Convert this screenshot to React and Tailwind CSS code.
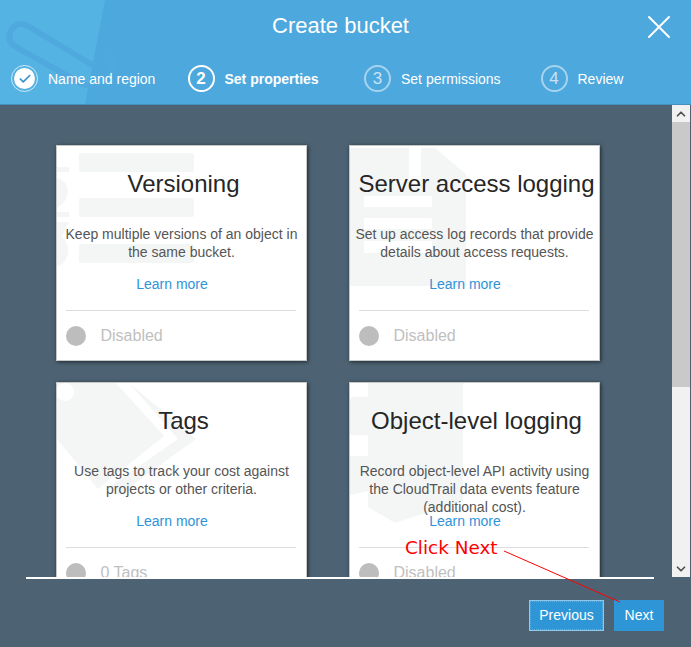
import React from 'react';
import { ChevronUp, ChevronDown, X, Check } from 'lucide-react';

const VersionArt = () => (
  <svg className="absolute left-0 top-0" width="251" height="216" fill="#f4f6f6" aria-hidden="true">
    <rect x="22" y="7" width="115" height="19" rx="2" />
    <rect x="22" y="52" width="115" height="19" rx="2" />
    <rect x="22" y="98" width="115" height="19" rx="2" />
    <rect x="0" y="21" width="12" height="5" />
    <path d="M0 32 Q10 34 11 46 Q10 56 0 62 Z" />
    <rect x="0" y="66" width="12" height="5" />
    <path d="M0 76 H12 L5 90 Q12 98 11 108 Q8 119 0 120 Z" />
  </svg>
);

const ServerArt = () => (
  <svg className="absolute left-0 top-0" width="251" height="216" aria-hidden="true">
    <path d="M0 2 H59 V38 H71 V2 H85 L116 28 V140 H0 Z" fill="#f4f6f6" />
    <rect x="14" y="50" width="68" height="11" rx="1" fill="#ffffff" />
    <rect x="14" y="72" width="68" height="11" rx="1" fill="#ffffff" />
    <rect x="14" y="95" width="68" height="12" rx="1" fill="#ffffff" />
  </svg>
);

const TagArt = () => (
  <svg className="absolute left-0 top-0" width="251" height="216" fill="#f4f6f6" aria-hidden="true">
    <path d="M0 0 H59 L107 53 L41 106 L0 56 Z" />
    <path d="M72 0 L139 56 L62 112 L52 104 L121 56 Z" />
    <circle cx="8" cy="9" r="9" fill="#ffffff" />
  </svg>
);

const ObjectArt = () => (
  <svg className="absolute left-0 top-0" width="251" height="216" aria-hidden="true">
    <path d="M0 16 L18 0 H113 V118 L45 140 L18 124 V108 L0 112 Z" fill="#f4f6f6" />
    <rect x="0" y="0" width="18" height="14" fill="#ffffff" />
    <rect x="0" y="52" width="18" height="21" fill="#ffffff" />
  </svg>
);

const cards = [
  {
    title: 'Versioning',
    text: 'Keep multiple versions of an object in the same bucket.',
    status: 'Disabled',
    art: <VersionArt />,
  },
  {
    title: 'Server access logging',
    text: 'Set up access log records that provide details about access requests.',
    status: 'Disabled',
    art: <ServerArt />,
  },
  {
    title: 'Tags',
    text: 'Use tags to track your cost against projects or other criteria.',
    status: '0 Tags',
    art: <TagArt />,
  },
  {
    title: 'Object-level logging',
    text: 'Record object-level API activity using the CloudTrail data events feature (additional cost).',
    status: 'Disabled',
    art: <ObjectArt />,
  },
];

const steps = [
  { n: '1', label: 'Name and region', done: true },
  { n: '2', label: 'Set properties', active: true },
  { n: '3', label: 'Set permissions' },
  { n: '4', label: 'Review' },
];

const Step = ({ step }) => (
  <div className="flex w-[176.5px] shrink-0 items-center gap-[10px] text-white">
    {step.done ? (
      <div className="flex h-[27px] w-[27px] items-center justify-center rounded-full border border-white/70">
        <div className="flex h-[21px] w-[21px] items-center justify-center rounded-full bg-white">
          <Check size={14} strokeWidth={3} className="text-[#3b94cf]" />
        </div>
      </div>
    ) : step.active ? (
      <div className="flex h-[27px] w-[27px] items-center justify-center rounded-full border-2 border-white text-[17px] font-bold">
        {step.n}
      </div>
    ) : (
      <div className="flex h-[27px] w-[27px] items-center justify-center rounded-full border-2 border-white/50 text-[17px] text-white/70">
        {step.n}
      </div>
    )}
    <span className={step.active ? 'text-sm font-bold' : 'text-sm'}>{step.label}</span>
  </div>
);

const Card = ({ card }) => (
  <div className="relative h-[216px] w-[251px] shrink-0 overflow-hidden border border-[#c8c8c8] bg-white shadow-[1px_1px_4px_rgba(0,0,0,0.6)]">
    {card.art}
    <div className="relative flex h-full flex-col items-center px-[3px]">
      <h2 className="ml-[4px] mt-[23px] whitespace-nowrap text-2xl leading-[30px] text-[#262626]">{card.title}</h2>
      <p className="mt-[26px] h-[50px] text-center text-sm leading-[18px] text-[#555555]">{card.text}</p>
      <a className="mr-[19px] text-sm leading-[18px] text-[#2f93d8]">Learn more</a>
      <div className="mr-[1px] mt-[17px] h-px w-[230px] bg-[#dddddd]" />
      <div className="mr-[2px] mt-[13px] flex w-[230px] items-center gap-[15px]">
        <span className="h-5 w-5 rounded-full bg-[#bdbdbd]" />
        <span className="text-base text-[#c0c0c0]">{card.status}</span>
      </div>
    </div>
  </div>
);

export default function App() {
  return (
    <div
      className="relative flex h-[647px] w-[691px] flex-col overflow-hidden bg-[#4d6373]"
      style={{ fontFamily: '"Liberation Sans", Arial, sans-serif' }}
    >
      {/* Header */}
      <header className="relative h-[105px] shrink-0 overflow-hidden border-b border-[#4690bd] bg-[#4da8dd]">
        <svg className="absolute left-0 top-0" width="130" height="104" aria-hidden="true">
          <path d="M0 0 H105 L85 104 H0 Z" fill="#55b3e3" />
          <path
            d="M94 66 L28 26 Q17 20 11 31 Q6 41 16 47 L82 84 Q100 90 112 72 Q118 60 108 53"
            fill="none"
            stroke="#4fa9de"
            strokeWidth="6"
            strokeLinecap="round"
          />
        </svg>
        <h1 className="relative pr-[10px] pt-[11px] text-center text-[22px] leading-[30px] text-white">Create bucket</h1>
        <X size={40} strokeWidth={1.2} className="absolute left-[639px] top-[7px] text-white" />
        <div className="relative mt-[24px] flex pl-[11px]">
          {steps.map((step) => (
            <Step key={step.n} step={step} />
          ))}
        </div>
      </header>

      {/* Scrolling cards */}
      <div className="flex h-[472px] shrink-0">
        <div className="h-full w-[672px] overflow-hidden pl-[56px] pt-[40px]">
          <div className="grid grid-cols-[251px_251px] gap-x-[42px] gap-y-[21px]">
            {cards.map((card) => (
              <Card key={card.title} card={card} />
            ))}
          </div>
        </div>
        <div className="flex h-full w-[18px] flex-col bg-[#f1f1f1]">
          <div className="flex h-[17px] items-center justify-center">
            <ChevronUp size={14} strokeWidth={3} className="text-[#505050]" />
          </div>
          <div className="h-[265px] bg-[#c9c9c9]" />
          <div className="flex-1" />
          <div className="flex h-[17px] items-center justify-center">
            <ChevronDown size={14} strokeWidth={3} className="text-[#505050]" />
          </div>
        </div>
      </div>

      {/* Footer */}
      <footer className="flex-1">
        <div className="ml-[26px] h-[1.5px] w-[628px] bg-white" />
        <div className="mt-[21px] flex justify-end gap-[10px] pr-[27px]">
          <button className="h-[31px] w-[75px] border border-[#8cc8ec] bg-[#2e96d6] text-sm text-white outline-dotted outline-1 -outline-offset-2 outline-[#5fb0e2]">
            Previous
          </button>
          <button className="h-[31px] w-[50px] bg-[#2e96d6] text-sm text-white">Next</button>
        </div>
      </footer>

      {/* Annotation drawn over the page */}
      <span
        className="absolute left-[405px] top-[536px] text-[18.4px] leading-[24px] text-[#ff0000]"
        style={{ fontFamily: '"DejaVu Sans", sans-serif' }}
      >
        Click Next
      </span>
      <svg className="absolute left-0 top-0" width="691" height="647" aria-hidden="true">
        <line x1="504" y1="551" x2="620" y2="602" stroke="#ff0000" strokeWidth="1" />
      </svg>
    </div>
  );
}
